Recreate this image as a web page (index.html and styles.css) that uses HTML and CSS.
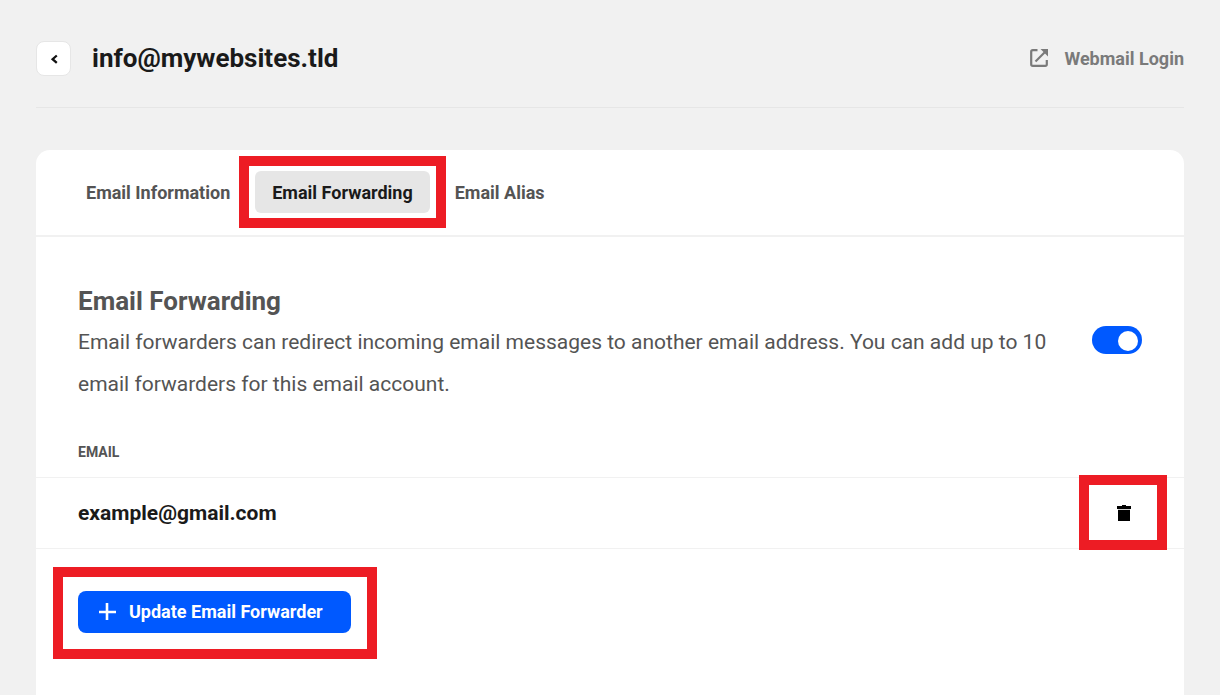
FILE: index.html
```html
<!DOCTYPE html>
<html lang="en">
<head>
    <meta charset="UTF-8">
    <meta name="viewport" content="width=device-width, initial-scale=1.0">
    <title>Email Forwarding</title>
    <link rel="stylesheet" href="styles.css">
</head>
<body>
    <header class="page-header">
        <button class="back-btn" type="button" aria-label="Back">
            <svg width="8" height="10" viewBox="0 0 8 10"><path d="M6.800 1.500L2.600 5.200l4.200 3.700" fill="none" stroke="#111" stroke-width="2.300"/></svg>
        </button>
        <h1>info@mywebsites.tld</h1>
        <a class="webmail-link" href="#">
            <svg width="18" height="18" viewBox="0 0 18 18" fill="none" stroke="currentColor" stroke-width="2.200">
                <path d="M7.500 1.200H2.800Q1.200 1.200 1.200 2.800v12.400Q1.200 16.800 2.800 16.800h12.400q1.600 0 1.600-1.600V11"/>
                <path d="M15.500 2.500L5.500 12.500"/>
                <path d="M10.500 0H18v7.500z" fill="currentColor" stroke="none"/>
            </svg>
            Webmail Login
        </a>
    </header>

    <main class="card">
        <nav class="tabs">
            <a class="tab" href="#">Email Information</a>
            <a class="tab active marked" href="#">Email Forwarding</a>
            <a class="tab" href="#">Email Alias</a>
        </nav>

        <section class="intro">
            <div class="intro-text">
                <h2 id="forwarding">Email Forwarding</h2>
                <p>Email forwarders can redirect incoming email messages to another email address. You can add up to 10 email forwarders for this email account.</p>
            </div>
            <input class="toggle" type="checkbox" aria-labelledby="forwarding" checked>
        </section>

        <table class="forwarders">
            <thead>
                <tr>
                    <th scope="col" colspan="2">EMAIL</th>
                </tr>
            </thead>
            <tbody>
                <tr>
                    <td>example@gmail.com</td>
                    <td class="actions">
                        <button class="delete-btn marked" type="button" aria-label="Delete">
                            <svg width="14" height="16" viewBox="0 0 14 16"><path d="M5 0h4v1h5v3H0V1h5z"/><path d="M1 4h12v1H1z" fill="#ccc"/><path d="M1 5h12v11H1z"/></svg>
                        </button>
                    </td>
                </tr>
            </tbody>
        </table>

        <div class="card-footer">
            <button class="update-btn marked" type="button">
                <svg width="18" height="18" viewBox="0 0 18 18"><path d="M9 0v17M1 9h17" stroke="#fff" stroke-width="2.600"/></svg>
                Update Email Forwarder
            </button>
        </div>
    </main>
</body>
</html>
```
FILE: styles.css
```css
* {
    box-sizing: border-box;
}
body {
    margin: 0;
    padding: 0 36px;
    min-height: 100vh;
    display: flex;
    flex-direction: column;
    background-color: #f1f1f1;
    color: #545454;
    font-family: Roboto, "Liberation Sans", sans-serif;
}
h1, h2, p {
    margin: 0;
}
a {
    color: inherit;
    text-decoration: none;
}
button {
    border: none;
    font-family: inherit;
    cursor: pointer;
}
.page-header {
    display: flex;
    align-items: center;
    padding: 41px 0 31px;
    border-bottom: 1px solid #e6e6e6;
}
.back-btn {
    display: flex;
    align-items: center;
    justify-content: center;
    width: 35px;
    height: 35px;
    padding: 0;
    border: 1px solid #e6e6e6;
    border-radius: 8px;
    background-color: #fff;
}
h1 {
    margin-left: 21px;
    padding-bottom: 2px;
    color: #1a1a1a;
    font-size: 26px;
    line-height: 32px;
}
.webmail-link {
    display: flex;
    align-items: center;
    gap: 16px;
    margin-left: auto;
    color: #7a7a7a;
    font-size: 18px;
    font-weight: bold;
}
.webmail-link svg {
    margin-bottom: 2px;
}
.card {
    flex: 1;
    margin-top: 42px;
    border-radius: 14px 14px 0 0;
    background-color: #fff;
}
.tabs {
    display: flex;
    gap: 8px;
    padding: 21px 33px 22px;
    border-bottom: 2px solid #f1f1f1;
}
.tab {
    height: 42px;
    padding: 0 17px;
    border-radius: 6px;
    font-size: 18px;
    font-weight: bold;
    line-height: 44px;
}
.tab.active {
    background-color: #e6e6e6;
    color: #1a1a1a;
}
.intro {
    display: flex;
    align-items: center;
    gap: 8px;
    padding: 42px 42px 0;
}
.intro-text {
    flex: 1;
}
h2 {
    padding-top: 2px;
    font-size: 26px;
    line-height: 40px;
}
p {
    font-size: 21px;
    line-height: 42px;
}
.toggle {
    appearance: none;
    flex: none;
    width: 50px;
    height: 28px;
    margin: 0 0 4px;
    padding: 5px 4px 3px;
    border-radius: 14px;
    background-color: #0059ff;
    cursor: pointer;
}
.toggle::before {
    content: "";
    display: block;
    width: 20px;
    height: 20px;
    border-radius: 50%;
    background-color: #fff;
}
.toggle:checked::before {
    margin-left: auto;
}
.forwarders {
    width: 100%;
    margin-top: 28px;
    border-collapse: collapse;
}
.forwarders th {
    height: 44px;
    padding: 0 42px 5px;
    border-bottom: 1px solid #f1f1f1;
    font-size: 14px;
    text-align: left;
}
.forwarders td {
    height: 71px;
    padding: 0 42px;
    border-bottom: 1px solid #f1f1f1;
    color: #1a1a1a;
    font-size: 21px;
    font-weight: bold;
}
.forwarders .actions {
    padding: 0 27px;
    text-align: right;
}
.delete-btn {
    display: inline-flex;
    align-items: center;
    justify-content: center;
    width: 68px;
    height: 42px;
    padding: 0 0 0 2px;
    background-color: transparent;
    vertical-align: middle;
}
.card-footer {
    padding: 42px;
}
.update-btn {
    display: flex;
    align-items: center;
    gap: 13px;
    height: 42px;
    padding: 0 28px 0 20px;
    border-radius: 8px;
    background-color: #0059ff;
    color: #fff;
    font-size: 18px;
    font-weight: bold;
}

/* red highlight frame around the control */
.marked {
    position: relative;
}
.marked::after {
    content: "";
    position: absolute;
    inset: -15px -16px;
    border: 10px solid #ed1c24;
}
.delete-btn.marked::after {
    inset: -17px -10px -16px;
}
.update-btn.marked::after {
    inset: -24px -26px -26px -25px;
}
```
